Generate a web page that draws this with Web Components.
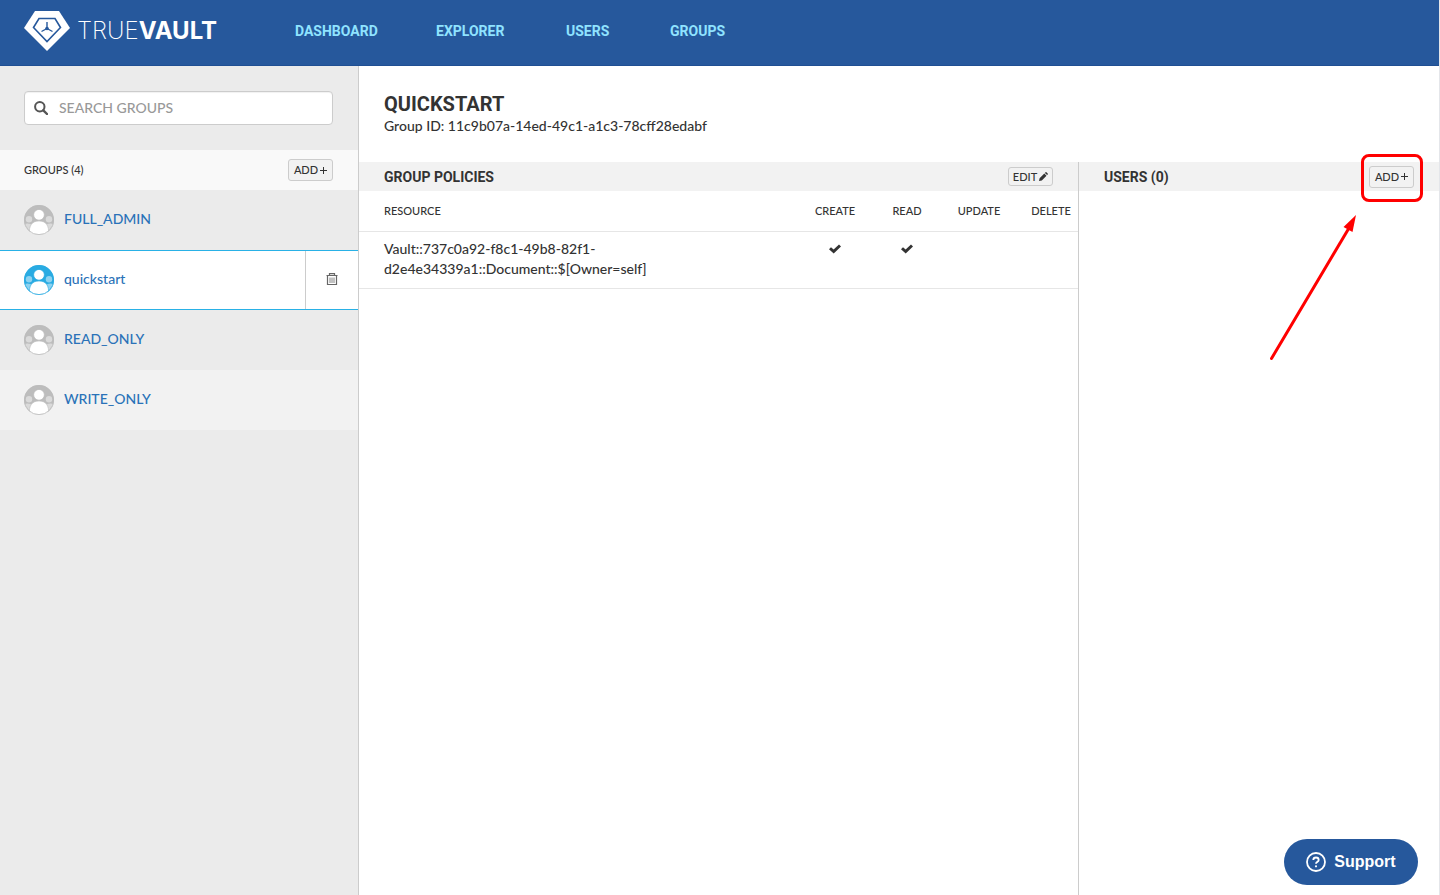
<!DOCTYPE html>
<html lang="en">
<head>
<meta charset="utf-8">
<title>TrueVault – Groups</title>
<style>
  html, body { height: 100%; }
  body { margin: 0; font: 500 14px/20px Lato, "Open Sans", sans-serif; color: #333; background: #fff; }
</style>
</head>
<body>
<tv-app></tv-app>

<template id="t-app">
  <style>
    :host { display: flex; flex-direction: column; min-height: 100vh; box-sizing: border-box; border-right: 1px solid #e4e6ea; }
    .body { flex: 1; display: grid; grid-template-columns: 359px minmax(0, 1fr); }
    main { display: flex; flex-direction: column; }
    .head { height: 96px; box-sizing: border-box; padding: 28px 25px 0; }
    h1 { margin: 0; font: 700 20px/20px Roboto, sans-serif; }
    .head p { margin: 2px 0 0; }
    .cols { flex: 1; display: grid; grid-template-columns: minmax(0, 2fr) minmax(0, 1fr); }
    .policies { border-right: 1px solid #ccc; }
    tv-support { position: fixed; right: 22px; bottom: 10px; }
  </style>
  <tv-header></tv-header>
  <div class="body">
    <tv-sidebar></tv-sidebar>
    <main>
      <div class="head">
        <h1>QUICKSTART</h1>
        <p>Group ID: 11c9b07a-14ed-49c1-a1c3-78cff28edabf</p>
      </div>
      <div class="cols">
        <section class="policies">
          <tv-panel-bar>GROUP POLICIES
            <tv-button slot="action" icon="pencil" compact>EDIT</tv-button>
          </tv-panel-bar>
          <tv-policies></tv-policies>
        </section>
        <section>
          <tv-panel-bar>USERS (0)
            <tv-callout slot="action"><tv-button icon="plus">ADD</tv-button></tv-callout>
          </tv-panel-bar>
        </section>
      </div>
    </main>
  </div>
  <tv-support></tv-support>
</template>

<template id="t-header">
  <style>
    :host { display: block; background: #26589c; }
    header { height: 66px; box-sizing: border-box; border-bottom: 1px solid #1f4f93; display: flex; align-items: flex-start; padding-left: 24px; }
    .logo { display: flex; align-items: center; gap: 7px; width: 271px; height: 62px; color: #fff; text-decoration: none; font: 200 24px/24px Inter, sans-serif; }
    .logo b { font-weight: 700; }
    nav { display: grid; grid-template-columns: 141px 130px 104px auto; height: 62px; align-items: center; }
    nav a { font: 700 14px/20px Roboto, sans-serif; color: #8fe3ff; text-decoration: none; }
  </style>
  <header>
    <a class="logo" href="#">
      <svg width="46" height="40" viewBox="0 0 46 40" aria-hidden="true">
        <path d="M11 0H35L46 17 23 40 0 17Z" fill="#fff"/>
        <path d="M15 7.500H31L36.500 16.500 23 30.500 9.500 16.500Z" fill="none" stroke="#26589c" stroke-width="1.600"/>
        <path d="M23 11V17.500M23 17.500L17.500 20.500M23 17.500L28.500 20.500" fill="none" stroke="#26589c" stroke-width="1.400"/>
        <circle cx="23" cy="17.500" r="1.800" fill="#26589c"/>
      </svg>
      <span>TRUE<b>VAULT</b></span>
    </a>
    <nav>
      <a href="#">DASHBOARD</a><a href="#">EXPLORER</a><a href="#">USERS</a><a href="#">GROUPS</a>
    </nav>
  </header>
</template>

<template id="t-sidebar">
  <style>
    :host { display: block; background: #ebebeb; border-right: 1px solid #ccc; }
    .search { height: 84px; box-sizing: border-box; padding: 25px 25px 0 24px; }
    .field { display: flex; align-items: center; gap: 11px; height: 34px; box-sizing: border-box; border: 1px solid #ccc; border-radius: 4px; background: #fff; padding: 0 9px; box-shadow: inset 0 1px 1px rgba(0,0,0,.06); }
    input { flex: 1; min-width: 0; border: 0; outline: 0; padding: 0; background: none; font: inherit; color: #333; }
    input::placeholder { color: #999; opacity: 1; }
    .bar { height: 40px; box-sizing: border-box; background: #f9f9f9; display: flex; align-items: center; justify-content: space-between; padding: 0 25px 0 24px; }
    h2 { margin: 0; font: inherit; font-size: 11px; }
  </style>
  <div class="search">
    <label class="field">
      <svg width="14" height="14" viewBox="0 0 14 14" role="img" aria-label="Search groups"><circle cx="5.800" cy="5.800" r="4.700" fill="none" stroke="#555" stroke-width="2"/><path d="M9.300 9.300L13 13" stroke="#555" stroke-width="2.400" stroke-linecap="round"/></svg>
      <input type="text" placeholder="SEARCH GROUPS">
    </label>
  </div>
  <div class="bar"><h2>GROUPS (4)</h2><tv-button icon="plus">ADD</tv-button></div>
  <tv-group>FULL_ADMIN</tv-group>
  <tv-group selected>quickstart</tv-group>
  <tv-group>READ_ONLY</tv-group>
  <tv-group alt>WRITE_ONLY</tv-group>
</template>

<template id="t-group">
  <style>
    :host { display: flex; height: 60px; box-sizing: border-box; --tone: #bdbdbd; --soft: #dadada; }
    :host([alt]) { background: #f2f2f2; }
    :host([selected]) { background: #fff; border-top: 1px solid #29b1e6; border-bottom: 1px solid #29b1e6; --tone: #29abe2; --soft: #8dd2f0; }
    a { flex: 1; display: flex; align-items: center; gap: 10px; padding-left: 24px; color: #2a72b8; text-decoration: none; }
    a span { padding-bottom: 2px; }
    button { display: none; width: 53px; padding: 0; border: 0; border-left: 1px solid #ccc; background: none; align-items: center; justify-content: center; }
    :host([selected]) button { display: flex; }
  </style>
  <a href="#">
    <svg width="30" height="30" viewBox="0 0 30 30" aria-hidden="true">
      <clipPath id="c"><circle cx="15" cy="15" r="15"/></clipPath>
      <g clip-path="url(#c)">
        <path d="M0 0H30V30H0Z" style="fill:var(--tone)"/>
        <g style="fill:var(--soft)"><circle cx="5" cy="14.300" r="3.200"/><circle cx="25" cy="14.300" r="3.200"/><path d="M0 19Q5 17.500 9 20L7 30H0ZM30 19Q25 17.500 21 20L23 30H30Z"/></g>
        <path d="M5.500 30C4.500 20 8.500 16 15 16S25.500 20 24.500 30Z" style="fill:#fff;stroke:var(--tone)" stroke-width=".6"/>
        <circle cx="15" cy="9.800" r="5.400" style="fill:#fff;stroke:var(--tone)" stroke-width=".8"/>
      </g>
      <circle cx="15" cy="15" r="14.600" fill="none" style="stroke:var(--tone)" stroke-width=".8"/>
    </svg>
    <span><slot></slot></span>
  </a>
  <button type="button" aria-label="Delete group">
    <svg width="12" height="14" viewBox="0 0 12 14" fill="none" stroke="#666" aria-hidden="true"><path d="M.5 2.500H11.500M3.500 2.500V.6H8.500V2.500M1.500 2.500V11.500H10.500V2.500" stroke-width="1.200"/><path d="M4 4.500V10M6 4.500V10M8 4.500V10" stroke-width=".8"/></svg>
  </button>
</template>

<template id="t-button">
  <style>
    :host { display: block; }
    button { display: flex; align-items: center; justify-content: center; gap: 2px; width: 45px; height: 22px; box-sizing: border-box; padding: 0; border: 1px solid #ccc; border-radius: 3px; background: #f2f2f2; color: #333; font: inherit; font-size: 11px; line-height: 16px; }
    :host([compact]) button { height: 19px; }
    svg { display: none; fill: #333; }
    :host([icon=plus]) .plus, :host([icon=pencil]) .pencil { display: block; }
  </style>
  <button type="button"><span><slot></slot></span>
    <svg class="plus" width="7" height="7" viewBox="0 0 7 7" aria-hidden="true"><path d="M3 0H4V3H7V4H4V7H3V4H0V3H3Z"/></svg>
    <svg class="pencil" width="9" height="9" viewBox="0 0 9 9" aria-hidden="true"><path d="M0 9L.6 6.200 5.300 1.500 7.500 3.700 2.800 8.400ZM5.900.9L6.600.2Q7 0 7.400.3L8.700 1.600Q9 2 8.700 2.500L8.100 3.100Z"/></svg>
  </button>
</template>

<template id="t-panel-bar">
  <style>
    :host { display: flex; height: 29px; align-items: center; justify-content: space-between; padding: 0 25px; box-sizing: border-box; background: #f2f2f2; color: #333; }
    h2 { margin: 0; font: 700 14px/20px Roboto, sans-serif; }
    div { font: 500 11px/16px Lato, sans-serif; }
  </style>
  <h2><slot></slot></h2><div><slot name="action"></slot></div>
</template>

<template id="t-callout">
  <style>
    :host { display: block; position: relative; }
    .ring { position: absolute; inset: -12px -9px -14px -8px; border: 3px solid #f00; border-radius: 8px; pointer-events: none; }
    svg { position: absolute; right: 56px; top: 49px; pointer-events: none; }
  </style>
  <slot></slot>
  <div class="ring"></div>
  <svg width="90" height="148" viewBox="0 0 90 148" aria-hidden="true"><path d="M3.500 143.500L81 13" stroke="#f00" stroke-width="3" stroke-linecap="round"/><path d="M88 0L84.500 17 80 14.500 75.500 12Z" fill="#f00"/></svg>
</template>

<template id="t-policies">
  <style>
    :host { display: block; }
    table { width: 100%; table-layout: fixed; border-collapse: separate; border-spacing: 0; }
    th { height: 40px; padding: 0 0 0 18px; width: 54px; font-size: 11px; font-weight: 500; text-align: center; border-bottom: 1px solid #e6e6e6; }
    td { padding: 7px 0 9px 18px; height: 40px; vertical-align: top; text-align: center; border-bottom: 1px solid #e6e6e6; }
    th:first-child, td:first-child { width: auto; padding-left: 25px; text-align: left; }
    svg { display: block; margin: 5px auto 0; }
  </style>
  <table>
    <thead><tr><th>RESOURCE</th><th>CREATE</th><th>READ</th><th>UPDATE</th><th>DELETE</th></tr></thead>
    <tbody><tr>
      <td>Vault::737c0a92-f8c1-49b8-82f1-d2e4e34339a1::Document::$[Owner=self]</td>
      <td><svg width="12" height="10" viewBox="0 0 12 10" role="img" aria-label="Allowed"><path d="M0 5.200L2 3.200 4.600 5.600 10 .4 12 2.400 4.700 9.600Z" fill="#333"/></svg></td>
      <td><svg width="12" height="10" viewBox="0 0 12 10" role="img" aria-label="Allowed"><path d="M0 5.200L2 3.200 4.600 5.600 10 .4 12 2.400 4.700 9.600Z" fill="#333"/></svg></td>
      <td></td><td></td>
    </tr></tbody>
  </table>
</template>

<template id="t-support">
  <style>
    :host { display: block; }
    button { display: flex; align-items: center; justify-content: center; gap: 8px; width: 134px; height: 46px; padding: 0; border: 0; border-radius: 23px; background: #26589c; color: #fff; font: 700 16px/20px "Liberation Sans", Arial, sans-serif; }
  </style>
  <button type="button">
    <svg width="20" height="20" viewBox="0 0 20 20" fill="none" stroke="#fff" aria-hidden="true"><circle cx="10" cy="10" r="9" stroke-width="1.800"/><path d="M7.300 8Q7.300 5.500 10 5.500T12.700 8Q12.700 9.100 11.300 9.900 10 10.600 10 11.800" stroke-width="1.800"/><circle cx="10" cy="14.300" r="1.100" fill="#fff" stroke="none"/></svg>
    Support
  </button>
</template>

<script>
  const define = (name) => {
    const template = document.getElementById('t-' + name);
    customElements.define('tv-' + name, class extends HTMLElement {
      constructor() {
        super();
        this.attachShadow({ mode: 'open' }).append(template.content.cloneNode(true));
      }
    });
  };
  ['button', 'callout', 'group', 'panel-bar', 'policies', 'support', 'header', 'sidebar', 'app'].forEach(define);
</script>
</body>
</html>
